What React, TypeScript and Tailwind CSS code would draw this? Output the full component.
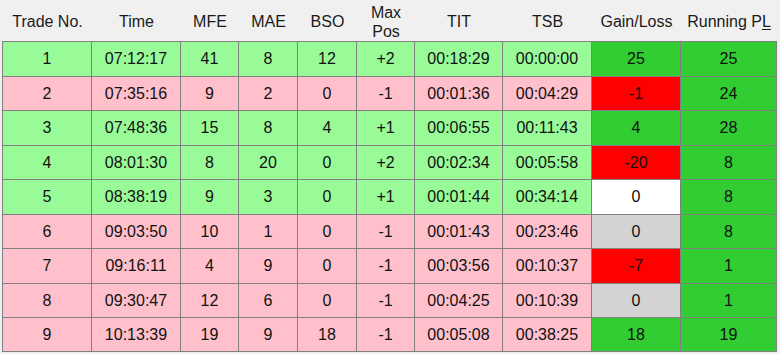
import React from "react";

type Row = {
  n: string; t: string; mfe: string; mae: string; bso: string; pos: string;
  tit: string; tsb: string; gl: string; glc: string; rp: string; bg: string;
};

const G = "bg-[#98fb98]";
const P = "bg-[#ffc0cb]";
const LIME = "bg-[#32cd32]";
const RED = "bg-[#ff0000]";
const GRAY = "bg-[#d3d3d3]";
const WHITE = "bg-white";

const rows: Row[] = [
  { n: "1", t: "07:12:17", mfe: "41", mae: "8", bso: "12", pos: "+2", tit: "00:18:29", tsb: "00:00:00", gl: "25", glc: LIME, rp: "25", bg: G },
  { n: "2", t: "07:35:16", mfe: "9", mae: "2", bso: "0", pos: "-1", tit: "00:01:36", tsb: "00:04:29", gl: "-1", glc: RED, rp: "24", bg: P },
  { n: "3", t: "07:48:36", mfe: "15", mae: "8", bso: "4", pos: "+1", tit: "00:06:55", tsb: "00:11:43", gl: "4", glc: LIME, rp: "28", bg: G },
  { n: "4", t: "08:01:30", mfe: "8", mae: "20", bso: "0", pos: "+2", tit: "00:02:34", tsb: "00:05:58", gl: "-20", glc: RED, rp: "8", bg: G },
  { n: "5", t: "08:38:19", mfe: "9", mae: "3", bso: "0", pos: "+1", tit: "00:01:44", tsb: "00:34:14", gl: "0", glc: WHITE, rp: "8", bg: G },
  { n: "6", t: "09:03:50", mfe: "10", mae: "1", bso: "0", pos: "-1", tit: "00:01:43", tsb: "00:23:46", gl: "0", glc: GRAY, rp: "8", bg: P },
  { n: "7", t: "09:16:11", mfe: "4", mae: "9", bso: "0", pos: "-1", tit: "00:03:56", tsb: "00:10:37", gl: "-7", glc: RED, rp: "1", bg: P },
  { n: "8", t: "09:30:47", mfe: "12", mae: "6", bso: "0", pos: "-1", tit: "00:04:25", tsb: "00:10:39", gl: "0", glc: GRAY, rp: "1", bg: P },
  { n: "9", t: "10:13:39", mfe: "19", mae: "9", bso: "18", pos: "-1", tit: "00:05:08", tsb: "00:38:25", gl: "18", glc: LIME, rp: "19", bg: P },
];

const heights = ["h-[35px]", "h-[34px]", "h-[35px]", "h-[34px]", "h-[35px]", "h-[34px]", "h-[35px]", "h-[34px]", "h-[34px]"];

const cols = "grid grid-cols-[89px_89px_58px_59px_59px_58px_88px_89px_89px_96px]";

function Cell({ children, bg, h }: { children: React.ReactNode; bg: string; h: string }) {
  return (
    <div className={`${bg} ${h} flex items-center justify-center border-r border-b border-[#808080] text-[16px] text-[#111]`}>
      {children}
    </div>
  );
}

export default function App() {
  const headers: React.ReactNode[] = [
    "Trade No.", "Time", "MFE", "MAE", "BSO",
    <span className="leading-[19px] text-center">Max<br />Pos</span>,
    "TIT", "TSB", "Gain/Loss",
    <span>Running P<span className="underline underline-offset-2">L</span></span>,
  ];
  return (
    <div className="w-[780px] h-[354px] bg-[#f0f0f0] overflow-hidden pl-[2px]" style={{ fontFamily: '"Liberation Sans", Arial, sans-serif' }}>
      <div className={`${cols} h-[41px] pl-[1px]`}>
        {headers.map((h, i) => (
          <div key={i} className="flex items-center justify-center text-[16px] text-[#1a1a1a] pt-[3px] whitespace-nowrap">
            {h}
          </div>
        ))}
      </div>
      <div className={`${cols} w-fit border-l border-t border-[#808080]`}>
        {rows.map((r, i) => {
          const h = heights[i];
          return (
            <React.Fragment key={i}>
              <Cell bg={r.bg} h={h}>{r.n}</Cell>
              <Cell bg={r.bg} h={h}>{r.t}</Cell>
              <Cell bg={r.bg} h={h}>{r.mfe}</Cell>
              <Cell bg={r.bg} h={h}>{r.mae}</Cell>
              <Cell bg={r.bg} h={h}>{r.bso}</Cell>
              <Cell bg={r.bg} h={h}>{r.pos}</Cell>
              <Cell bg={r.bg} h={h}>{r.tit}</Cell>
              <Cell bg={r.bg} h={h}>{r.tsb}</Cell>
              <Cell bg={r.glc} h={h}>{r.gl}</Cell>
              <Cell bg={LIME} h={h}>{r.rp}</Cell>
            </React.Fragment>
          );
        })}
      </div>
    </div>
  );
}
